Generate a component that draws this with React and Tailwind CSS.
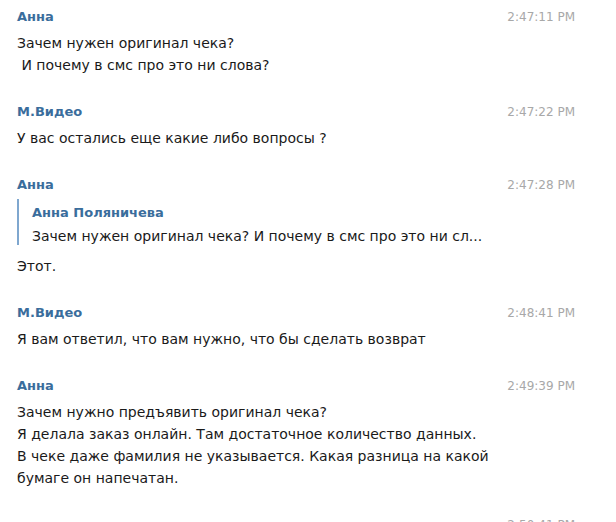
import React from "react";

const messages = [
  {
    name: "Анна",
    time: "2:47:11 PM",
    lines: ["Зачем нужен оригинал чека?", "\u00a0И почему в смс про это ни слова?"],
  },
  {
    name: "М.Видео",
    time: "2:47:22 PM",
    lines: ["У вас остались еще какие либо вопросы ?"],
  },
  {
    name: "Анна",
    time: "2:47:28 PM",
    reply: {
      name: "Анна Поляничева",
      text: "Зачем нужен оригинал чека? И почему в смс про это ни сл...",
    },
    lines: ["Этот."],
  },
  {
    name: "М.Видео",
    time: "2:48:41 PM",
    lines: ["Я вам ответил, что вам нужно, что бы сделать возврат"],
  },
  {
    name: "Анна",
    time: "2:49:39 PM",
    lines: [
      "Зачем нужно предъявить оригинал чека?",
      "Я делала заказ онлайн. Там достаточное количество данных.",
      "В чеке даже фамилия не указывается. Какая разница на какой",
      "бумаге он напечатан.",
    ],
  },
  // only the top of the next timestamp peeks in at the bottom edge
  {
    name: "",
    time: "2:50:41 PM",
    lines: [],
  },
];

const Message = ({ msg }) => (
  <div className="pt-[6px] pb-[19px] pl-[17px] pr-[41px]">
    <div className="flex items-center justify-between h-[22px]">
      <span className="font-bold text-[13px] text-[#3a6d9c]">{msg.name}</span>
      <span className="text-[12px] text-[#a8a8a8]">{msg.time}</span>
    </div>
    {msg.reply && (
      <div className="mt-[3px] border-l-2 border-[#7fa7cf] pl-[13px] pt-[5px]">
        <div className="font-bold text-[13px] leading-[18px] text-[#3a6d9c]">
          {msg.reply.name}
        </div>
        <div className="mt-[5px] text-[14px] leading-[18px] text-[#1a1a1a]">
          {msg.reply.text}
        </div>
      </div>
    )}
    <div
      className={
        msg.reply
          ? "mt-[10px] text-[14px] leading-[22px] text-[#1a1a1a]"
          : "mt-[4px] text-[14px] leading-[22px] text-[#1a1a1a]"
      }
    >
      {msg.lines.map((l, i) => (
        <div key={i} className="whitespace-pre">
          {l}
        </div>
      ))}
    </div>
  </div>
);

export default function App() {
  return (
    <div className="w-[616px] h-[522px] overflow-hidden bg-white font-['DejaVu_Sans',sans-serif]">
      {messages.map((m, i) => (
        <Message key={i} msg={m} />
      ))}
    </div>
  );
}
